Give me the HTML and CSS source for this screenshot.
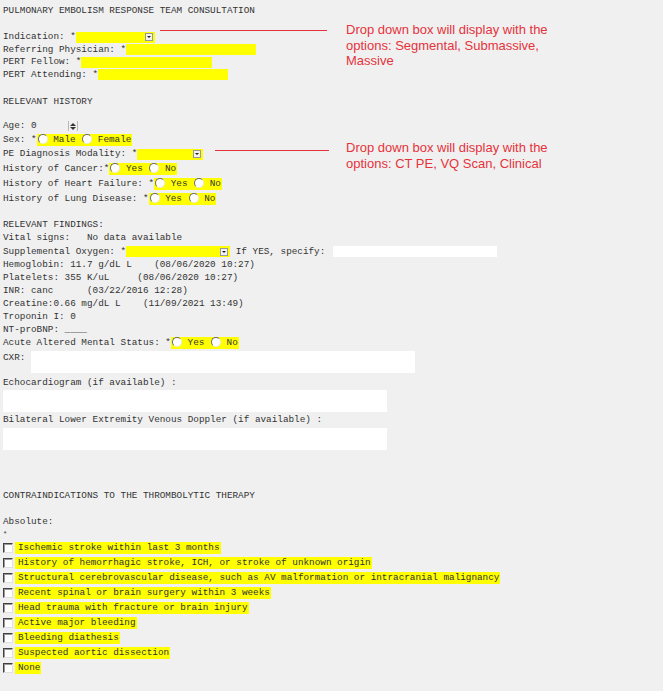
FILE: index.html
```html
<!DOCTYPE html>
<html>
<head>
<meta charset="utf-8">
<link rel="stylesheet" href="styles.css">
</head>
<body>
<div class="page">
  <div class="row h13">PULMONARY EMBOLISM RESPONSE TEAM CONSULTATION</div>

  <div class="sec mt14">
    <div class="row h125">Indication: *<span class="sel w79"><span class="arr"></span></span></div>
    <div class="row h125">Referring Physician: *<span class="txt w130"></span></div>
    <div class="row h125">PERT Fellow: *<span class="txt w131"></span></div>
    <div class="row h125">PERT Attending: *<span class="txt w130"></span></div>
  </div>

  <div class="row h13 mt14">RELEVANT HISTORY</div>
  <div class="row h12 mt12">Age: <span class="num">0<span class="spin"><span class="up"></span><span class="dn"></span></span></span></div>
  <div class="row h15">Sex: *<span class="opts"><span class="radio"></span> Male <span class="radio"></span> Female</span></div>
  <div class="row h14">PE Diagnosis Modality: *<span class="sel w66"><span class="arr"></span></span></div>
  <div class="row h15">History of Cancer:*<span class="opts"><span class="radio"></span> Yes <span class="radio"></span> No</span></div>
  <div class="row h15">History of Heart Failure: *<span class="opts"><span class="radio"></span> Yes <span class="radio"></span> No</span></div>
  <div class="row h15">History of Lung Disease: *<span class="opts"><span class="radio"></span> Yes <span class="radio"></span> No</span></div>

  <div class="row h13 mt125">RELEVANT FINDINGS:</div>
  <div class="row h13">Vital signs:   No data available</div>
  <div class="row h14">Supplemental Oxygen: *<span class="sel w104"><span class="arr"></span></span> If YES, specify: <span class="spec"></span></div>
  <div class="row h13">Hemoglobin: 11.7 g/dL L    (08/06/2020 10:27)</div>
  <div class="row h13">Platelets: 355 K/uL     (08/06/2020 10:27)</div>
  <div class="row h13">INR: canc      (03/22/2016 12:28)</div>
  <div class="row h13">Creatine:0.66 mg/dL L    (11/09/2021 13:49)</div>
  <div class="row h13">Troponin I: 0</div>
  <div class="row h13">NT-proBNP: ____</div>
  <div class="row h13">Acute Altered Mental Status: *<span class="opts"><span class="radio"></span> Yes <span class="radio"></span> No</span></div>

  <div class="cxr">
    <span class="cxr-label">CXR:</span>
    <span class="box cxr-box"></span>
  </div>
  <div class="row h13 mt35">Echocardiogram (if available) :</div>
  <div class="box wide mt05"></div>
  <div class="row h13 mt15">Bilateral Lower Extremity Venous Doppler (if available) :</div>
  <div class="box wide mt15"></div>

  <div class="row h13 mt395">CONTRAINDICATIONS TO THE THROMBOLYTIC THERAPY</div>
  <div class="row h12 mt13">Absolute:</div>
  <div class="row h13 star">*</div>
  <div class="checks">
    <div class="row h15"><span class="check"></span><span class="clabel">Ischemic stroke within last 3 months</span></div>
    <div class="row h15"><span class="check"></span><span class="clabel">History of hemorrhagic stroke, ICH, or stroke of unknown origin</span></div>
    <div class="row h15"><span class="check"></span><span class="clabel">Structural cerebrovascular disease, such as AV malformation or intracranial malignancy</span></div>
    <div class="row h15"><span class="check"></span><span class="clabel">Recent spinal or brain surgery within 3 weeks</span></div>
    <div class="row h15"><span class="check"></span><span class="clabel">Head trauma with fracture or brain injury</span></div>
    <div class="row h15"><span class="check"></span><span class="clabel">Active major bleeding</span></div>
    <div class="row h15"><span class="check"></span><span class="clabel">Bleeding diathesis</span></div>
    <div class="row h15"><span class="check"></span><span class="clabel">Suspected aortic dissection</span></div>
    <div class="row h15"><span class="check"></span><span class="clabel">None</span></div>
  </div>

  <div class="note-line line1"></div>
  <div class="note note1">Drop down box will display with the<br>options: Segmental, Submassive,<br>Massive</div>
  <div class="note-line line2"></div>
  <div class="note note2">Drop down box will display with the<br>options: CT PE, VQ Scan, Clinical</div>
</div>
</body>
</html>
```

FILE: styles.css
```css
html, body {
  margin: 0;
  padding: 0;
  background: #f0f0f0;
}
body {
  width: 663px;
  height: 691px;
  overflow: hidden;
}
.page {
  position: relative;
  padding: 4px 0 0 3px;
  font-family: "Liberation Mono", "Courier New", monospace;
  font-size: 9.33px;
  color: #333;
}
.row {
  display: flex;
  align-items: center;
  white-space: pre;
  line-height: 12px;
}
.h12 { height: 12px; }
.h125 { height: 12.5px; }
.h13 { height: 13px; }
.h14 { height: 14px; }
.h15 { height: 15px; }
.mt05 { margin-top: 0.5px; }
.mt12 { margin-top: 12px; }
.mt125 { margin-top: 12.5px; }
.mt13 { margin-top: 13px; }
.mt14 { margin-top: 14px; }
.mt15 { margin-top: 1.5px; }
.mt35 { margin-top: 3.5px; }
.mt395 { margin-top: 39.5px; }

.sel {
  display: inline-flex;
  justify-content: flex-end;
  align-items: center;
  height: 11px;
  background: #ffff00;
  padding-right: 2px;
  box-sizing: border-box;
}
.w79 { width: 79px; }
.w66 { width: 66px; }
.w104 { width: 104px; }
.arr {
  position: relative;
  width: 8px;
  height: 8px;
  box-sizing: border-box;
  border: 1px solid #9a9a9a;
  background: #f2f2f2;
}
.arr::after {
  content: "";
  position: absolute;
  left: 1px;
  top: 2px;
  border-left: 2px solid transparent;
  border-right: 2px solid transparent;
  border-top: 2px solid #222;
}
.txt {
  display: inline-block;
  height: 11px;
  background: #ffff00;
}
.w130 { width: 130px; }
.w131 { width: 131px; }

.num {
  display: inline-flex;
  align-items: center;
  width: 48px;
  height: 11px;
  justify-content: space-between;
}
.spin {
  display: inline-flex;
  flex-direction: column;
  align-items: center;
  justify-content: center;
  gap: 1px;
  width: 8px;
  height: 10px;
  border-left: 1px solid #b8b8b8;
  border-right: 1px solid #b8b8b8;
  margin-right: 1px;
}
.up {
  border-left: 3px solid transparent;
  border-right: 3px solid transparent;
  border-bottom: 3px solid #333;
}
.dn {
  border-left: 3px solid transparent;
  border-right: 3px solid transparent;
  border-top: 3px solid #333;
}

.opts {
  display: inline-flex;
  align-items: center;
  height: 12px;
  background: #ffff00;
  padding-right: 1px;
}
.radio {
  display: inline-block;
  width: 10px;
  height: 10px;
  box-sizing: border-box;
  border-radius: 50%;
  background: #fff;
  border: 1px solid;
  border-color: #6a6a6a #e8e8e8 #e8e8e8 #6a6a6a;
  margin-left: 1px;
  align-self: flex-start;
}

.spec {
  display: inline-block;
  width: 164px;
  height: 11px;
  background: #fff;
  margin-left: 2px;
}

.cxr {
  display: flex;
  align-items: flex-start;
  margin-top: 1.5px;
  height: 22px;
}
.cxr-label {
  line-height: 13px;
  height: 13px;
  width: 28px;
}
.box {
  display: block;
  height: 22px;
  background: #fff;
}
.cxr-box { width: 384px; }
.wide { width: 384px; }

.star { font-size: 7px; }

.check {
  display: inline-block;
  width: 10px;
  height: 10px;
  box-sizing: border-box;
  background: #fff;
  border: 1px solid;
  border-color: #404040 #e0e0e0 #e0e0e0 #404040;
  box-shadow: inset 1px 1px 0 #9a9a9a;
}
.clabel {
  display: inline-flex;
  align-items: center;
  height: 12px;
  background: #ffff00;
  margin-left: 2px;
  padding-left: 3px;
  padding-right: 1px;
}

.note {
  position: absolute;
  left: 346px;
  font-family: "Liberation Sans", Arial, sans-serif;
  font-size: 13px;
  line-height: 15.5px;
  color: #e5333c;
  white-space: nowrap;
}
.note1 { top: 22px; }
.note2 { top: 140px; }
.note-line {
  position: absolute;
  height: 1px;
  background: #e5333c;
}
.line1 { left: 160px; width: 167px; top: 30px; }
.line2 { left: 215px; width: 114px; top: 150px; }
```
